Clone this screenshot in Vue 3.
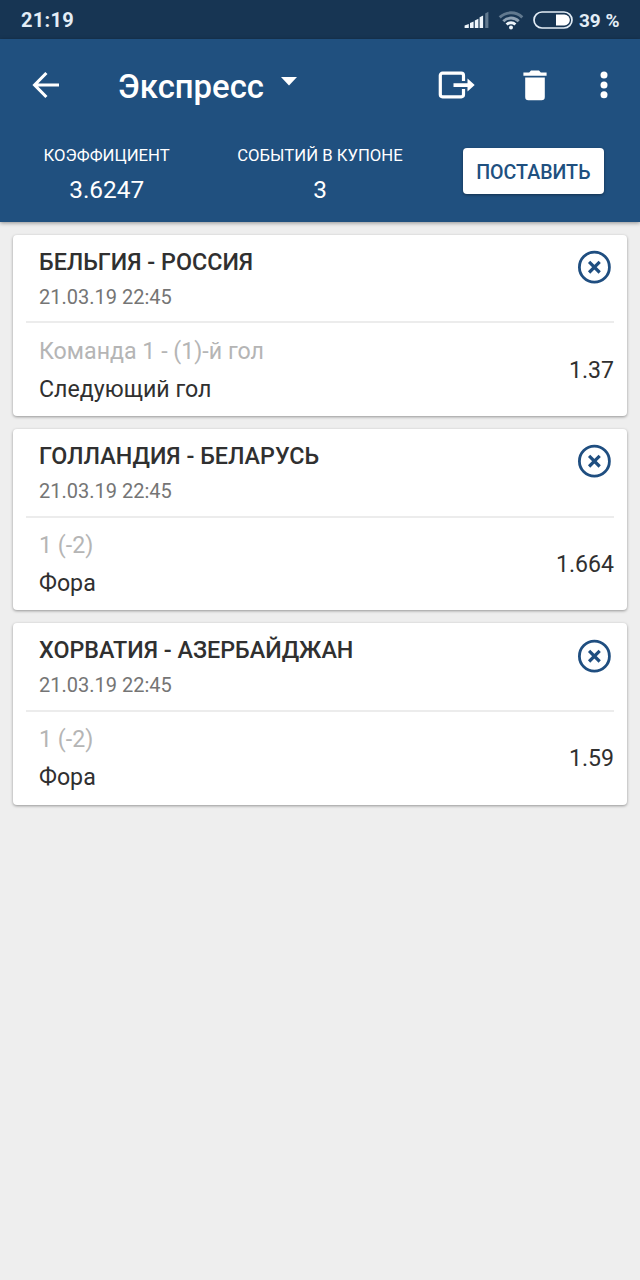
<script setup>
import { ref, computed } from 'vue'

const events = ref([
    { id: 1, title: 'БЕЛЬГИЯ - РОССИЯ', date: '21.03.19 22:45', pick: 'Команда 1 - (1)-й гол', market: 'Следующий гол', odd: '1.37' },
    { id: 2, title: 'ГОЛЛАНДИЯ - БЕЛАРУСЬ', date: '21.03.19 22:45', pick: '1 (-2)', market: 'Фора', odd: '1.664' },
    { id: 3, title: 'ХОРВАТИЯ - АЗЕРБАЙДЖАН', date: '21.03.19 22:45', pick: '1 (-2)', market: 'Фора', odd: '1.59' }
])

const total = computed(() => events.value.reduce((acc, e) => acc * Number(e.odd), 1).toFixed(4))

const removeEvent = (id) => {
    events.value = events.value.filter(e => e.id !== id)
}
</script>

<template>
    <div class="screen">
        <div class="status">
            <span class="status-time">21:19</span>
            <div class="status-right">
                <svg class="signal" width="26" height="18" viewBox="0 0 26 18">
                    <path d="M.6 17v-2.4l4.2-1.6V17zM6 17v-5l3.6-1.4V17zM10.8 17V9.4l3.6-1.7V17zM15.6 17V6.2l3.5-1.8V17z" fill="#eef5fb" />
                    <path d="M21.2 17V2.4L24.4.8V17z" fill="#61798f" />
                </svg>
                <svg class="wifi" width="26" height="20" viewBox="0 0 26 20" fill="none" stroke-width="2.9">
                    <path d="M1.7 7.4a16.2 16.2 0 0 1 22.6 0" stroke="#61798f" />
                    <path d="M5.3 11.2a11 11 0 0 1 15.4 0" stroke="#8fa2b4" />
                    <path d="M8.6 14.5a6.3 6.3 0 0 1 8.8 0" stroke="#eef5fb" />
                    <circle cx="13" cy="17.4" r="2" fill="#eef5fb" />
                </svg>
                <svg class="battery" width="40" height="18" viewBox="0 0 40 18">
                    <rect x="1" y="1" width="38" height="16" rx="8" fill="none" stroke="#e3edf6" stroke-width="1.7" />
                    <path d="M23 3.6h8.4a5.4 5.4 0 0 1 0 10.8H23z" fill="#fff" />
                </svg>
                <span class="status-percent">39 %</span>
            </div>
        </div>

        <header class="head">
            <div class="toolbar">
                <svg class="back" width="28" height="28" viewBox="0 0 28 28" fill="none" stroke="#fff" stroke-width="3.1">
                    <path d="M14.4 2L2.6 14l11.8 12M2.6 14H27" />
                </svg>
                <h1 class="title">Экспресс</h1>
                <svg class="caret" width="16" height="9" viewBox="0 0 16 9"><path d="M0 0h16L8 8.6z" fill="#fff" /></svg>
                <svg class="exit" width="38" height="28" viewBox="0 0 38 28">
                    <path d="M25.5 10V4.4a2.2 2.2 0 0 0-2.2-2.2H4.5a2.2 2.2 0 0 0-2.2 2.2v19.2a2.2 2.2 0 0 0 2.2 2.2h18.8a2.2 2.2 0 0 0 2.2-2.2V18" fill="none" stroke="#fff" stroke-width="3.2" />
                    <path d="M15.5 12.3h14V7.6l7.2 6.5-7.2 6.5v-4.7h-14z" fill="#fff" />
                </svg>
                <svg class="trash" width="24" height="31" viewBox="0 0 24 31" fill="#fff">
                    <path d="M.4 2.4h5.8L8 .4h8l1.8 2h5.8v3.3H.4zM2.2 7.4h19.6V27a3.2 3.2 0 0 1-3.2 3.2H5.4A3.2 3.2 0 0 1 2.2 27z" />
                </svg>
                <svg class="more" width="8" height="28" viewBox="0 0 8 28" fill="#fff">
                    <circle cx="4" cy="4" r="3.5" />
                    <circle cx="4" cy="14" r="3.5" />
                    <circle cx="4" cy="23.7" r="3.5" />
                </svg>
            </div>
            <div class="summary">
                <div class="summary-item">
                    <p class="summary-label">КОЭФФИЦИЕНТ</p>
                    <p class="summary-value">{{ total }}</p>
                </div>
                <div class="summary-item">
                    <p class="summary-label">СОБЫТИЙ В КУПОНЕ</p>
                    <p class="summary-value">{{ events.length }}</p>
                </div>
                <div class="summary-item">
                    <button class="bet">ПОСТАВИТЬ</button>
                </div>
            </div>
        </header>

        <main class="list">
            <section class="card" v-for="event in events" :key="event.id">
                <div class="card-head">
                    <div>
                        <h2 class="card-title">{{ event.title }}</h2>
                        <p class="card-date">{{ event.date }}</p>
                    </div>
                    <svg class="remove" width="34" height="34" viewBox="0 0 34 34" fill="none" stroke="#1f4e80" @click="removeEvent(event.id)">
                        <circle cx="17.4" cy="17.2" r="15" stroke-width="2.8" />
                        <path d="M12.1 11.9l10.6 10.6M22.7 11.9L12.1 22.5" stroke-width="3.2" />
                    </svg>
                </div>
                <div class="card-body">
                    <div>
                        <p class="card-pick">{{ event.pick }}</p>
                        <p class="card-market">{{ event.market }}</p>
                    </div>
                    <span class="card-odd">{{ event.odd }}</span>
                </div>
            </section>
        </main>
    </div>
</template>

<style>
body { margin: 0; background: #eee; }
</style>

<style scoped>
.screen { min-height: 1280px; background: #eee; font-family: Roboto, 'Noto Sans', sans-serif; color: #303030; }
h1, h2, p { margin: 0; white-space: nowrap; }
svg { display: block; flex-shrink: 0; }

/* status bar */
.status { display: flex; align-items: center; justify-content: space-between; box-sizing: border-box; height: 39px; padding: 1px 20.5px 0 21px; background: #173553; color: #e3edf6; }
.status-time { font-size: 20px; font-weight: 700; letter-spacing: 0.3px; }
.status-right { display: flex; align-items: center; }
.wifi { margin-left: 8px; }
.battery { margin-left: 9px; }
.status-percent { margin-left: 6px; font-size: 19px; font-weight: 700; }

/* header */
.head { position: relative; box-sizing: border-box; height: 182.5px; background: #20507f; color: #fff; box-shadow: 0 1px 4px rgba(0, 0, 0, 0.4); }
.toolbar { display: flex; align-items: center; height: 92px; padding: 0 32px; }
.title { margin-left: 58px; padding-top: 3px; font-size: 32.9px; line-height: 38px; font-weight: 500; }
.caret { margin: -7px 0 0 17px; }
.exit { margin-left: auto; }
.trash { margin-left: 47px; }
.more { margin-left: 53px; }
.summary { display: flex; }
.summary-item { flex: 1; display: flex; flex-direction: column; align-items: center; padding-top: 14px; }
.summary-label { padding-top: 1px; font-size: 16.7px; line-height: 20px; }
.summary-value { margin-top: 9px; font-size: 24.4px; line-height: 30px; }
.bet { width: 141px; height: 46px; margin-top: 3px; padding: 2px 0 0; border: none; border-radius: 4px; background: #fff; color: #20507f; font-family: inherit; font-size: 19.6px; font-weight: 500; box-shadow: 0 1px 3px rgba(0, 0, 0, 0.4); }

/* coupon events */
.list { display: flex; flex-direction: column; gap: 13px; padding: 13.3px 13px; }
.card { box-sizing: border-box; height: 181.3px; padding: 0 13px; border-radius: 4px; background: #fff; box-shadow: 0 1px 3px rgba(0, 0, 0, 0.38); }
.card-head { display: flex; justify-content: space-between; box-sizing: border-box; height: 88.7px; padding: 14px 3px 0 13px; border-bottom: 2px solid #ececec; }
.card-title { font-size: 23.3px; line-height: 27px; font-weight: 500; }
.card-date { margin-top: 10px; font-size: 20px; line-height: 23px; color: #757575; }
.remove { margin-top: 1.4px; cursor: pointer; }
.card-body { display: flex; align-items: center; justify-content: space-between; padding: 14.3px 0 0 13px; }
.card-pick { font-size: 23.2px; line-height: 27px; color: #b5b5b5; }
.card-market { margin-top: 11px; font-size: 23.2px; line-height: 27px; }
.card-odd { font-size: 23.1px; line-height: 27px; }
</style>
